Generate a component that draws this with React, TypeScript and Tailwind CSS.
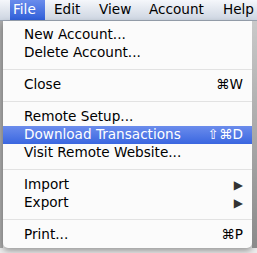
import React from 'react';

type Item =
  | { kind: 'item'; label: string; shortcut?: string; submenu?: boolean; active?: boolean }
  | { kind: 'sep' };

const items: Item[] = [
  { kind: 'item', label: 'New Account...' },
  { kind: 'item', label: 'Delete Account...' },
  { kind: 'sep' },
  { kind: 'item', label: 'Close', shortcut: '⌘W' },
  { kind: 'sep' },
  { kind: 'item', label: 'Remote Setup...' },
  { kind: 'item', label: 'Download Transactions', shortcut: '⇧⌘D', active: true },
  { kind: 'item', label: 'Visit Remote Website...' },
  { kind: 'sep' },
  { kind: 'item', label: 'Import', submenu: true },
  { kind: 'item', label: 'Export', submenu: true },
  { kind: 'sep' },
  { kind: 'item', label: 'Print...', shortcut: '⌘P' },
];

// menu bar titles with their box widths
const barItems = [
  { label: 'File', box: 'w-[35px] ml-[10px]' },
  { label: 'Edit', box: 'w-[45px] ml-[6px]' },
  { label: 'View', box: 'w-[50px]' },
  { label: 'Account', box: 'w-[74px]' },
  { label: 'Help', box: 'w-[37px]' },
];

const MenuRow: React.FC<{ item: Item }> = ({ item }) => {
  if (item.kind === 'sep') {
    return (
      <div className="h-[14px] flex items-center">
        <div className="h-px w-full bg-[#e2e2e2]" />
      </div>
    );
  }
  return (
    <div
      className={`h-[18px] flex items-center pl-[21px] pr-[9px] ${
        item.active ? 'bg-gradient-to-b from-[#6b8cec] to-[#3a66e0] text-white' : 'text-black'
      }`}
    >
      <span className="flex-1 whitespace-nowrap">{item.label}</span>
      {item.shortcut && <span className="whitespace-nowrap">{item.shortcut}</span>}
      {item.submenu && <span className="text-[12px] text-[#333]">▶</span>}
    </div>
  );
};

export default function App() {
  return (
    <div
      className="w-[257px] h-[253px] overflow-hidden bg-[#ececec] flex flex-col text-[13.6px] leading-none"
      style={{ fontFamily: '"DejaVu Sans", sans-serif' }}
    >
      {/* menu bar */}
      <div className="h-[21px] flex items-stretch bg-gradient-to-b from-[#f5f7fb] to-[#cdd5e1] border-b border-[#9aa3b0] whitespace-nowrap">
        {barItems.map((b, i) => (
          <div
            key={b.label}
            className={`shrink-0 flex items-center pl-[3px] ${b.box} ${
              i === 0 ? 'bg-gradient-to-b from-[#6a8cec] to-[#2f5ed8] text-white' : 'text-black'
            }`}
          >
            {b.label}
          </div>
        ))}
      </div>

      <div className="flex flex-1">
        <div className="w-[3px] h-[227px] bg-[#a9a9a9]" />
        <div className="w-[249px] self-start h-[227px] bg-[#fbfbfb] rounded-b-[5px] shadow-[0_3px_6px_rgba(0,0,0,0.35)] pt-[5px] pb-[4px] overflow-hidden">
          {items.map((item, i) => (
            <MenuRow key={i} item={item} />
          ))}
        </div>
        <div className="w-[5px] h-[227px] bg-gradient-to-b from-[#c9c9c9] to-[#8a8a8a]" />
      </div>
    </div>
  );
}
